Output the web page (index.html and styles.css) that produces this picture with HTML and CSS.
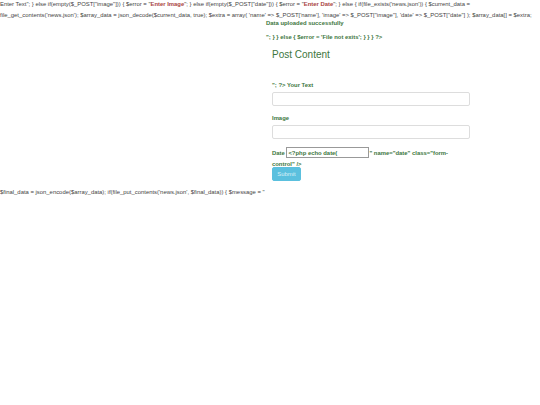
FILE: index.html
```html
<!DOCTYPE html>
<html lang="en">
<head>
<meta charset="UTF-8" />
<title>Post Content</title>
<link rel="stylesheet" href="styles.css">
</head>
<body>

<div class="code">Enter Text"; } else if(empty($_POST["image"])) { $error = "<span class="error">Enter Image</span>"; } else if(empty($_POST["date"])) { $error = "<span class="error">Enter Date</span>"; } else { if(file_exists('news.json')) { $current_data = file_get_contents('news.json'); $array_data = json_decode($current_data, true); $extra = array( 'name' =&gt; $_POST['name'], 'image' =&gt; $_POST["image"], 'date' =&gt; $_POST["date"] ); $array_data[] = $extra;</div>

<div class="container">
  <div class="message">Data uploaded successfully</div>
  <div class="message leftover">"; } } else { $error = 'File not exits'; } } } ?&gt;</div>

  <form class="post-form">
    <h2>Post Content</h2>
    <div class="field">
      <label>"; ?&gt; Your Text</label>
      <input type="text" class="form-control">
    </div>
    <div class="field">
      <label>Image</label>
      <input type="text" class="form-control">
    </div>
    <div class="date-row">
      <label>Date <input type="text" class="date-input" value="&lt;?php echo date(">" name="date" class="form-control" /&gt;</label>
    </div>
    <button type="button" class="submit">Submit</button>
  </form>
</div>

<div class="code final">$final_data = json_encode($array_data); if(file_put_contents('news.json', $final_data)) { $message = "</div>

</body>
</html>
```

FILE: styles.css
```css
body {
  margin: 0;
  font-family: "Liberation Sans", Arial, sans-serif;
  font-size: 5.9px;
  color: #444;
  background-color: #fff;
}
.code {
  line-height: 11px;
  height: 22px;
  margin-top: -1px;
}
.error {
  color: #a94442;
  font-weight: bold;
}
.container {
  width: 204px;
  margin-top: -2px;
  margin-left: 266px;
}
.message {
  font-weight: bold;
  color: #3c763d;
  line-height: 9px;
}
.leftover {
  margin-top: 5px;
}
.post-form {
  padding-left: 6px;
  color: #3c763d;
}
h2 {
  margin: 7px 0 20px;
  font-size: 10px;
  font-weight: normal;
  line-height: 12px;
}
.field {
  margin-bottom: 8px;
}
.field label {
  display: block;
  font-weight: bold;
  line-height: 8px;
  margin-bottom: 3px;
}
.form-control {
  display: block;
  box-sizing: border-box;
  width: 198px;
  height: 14px;
  padding: 0 4px;
  border: 1px solid #ddd;
  border-radius: 2px;
  background-color: #fff;
}
.date-row {
  font-weight: bold;
  line-height: 11px;
  width: 190px;
  height: 20px;
}
.date-input {
  box-sizing: border-box;
  width: 83px;
  height: 11px;
  padding: 0 1px;
  border: 1px solid #999;
  font-family: "Liberation Sans", Arial, sans-serif;
  font-size: 5.9px;
  font-weight: bold;
  color: #3c763d;
}
.submit {
  display: block;
  width: 29px;
  height: 14px;
  padding: 0;
  border: 1px solid #5bc0de;
  border-radius: 2px;
  background-color: #5bc0de;
  color: #d9f0f7;
  font-family: "Liberation Sans", Arial, sans-serif;
  font-size: 5.9px;
  cursor: pointer;
}
.final {
  margin-top: 6px;
}
```
